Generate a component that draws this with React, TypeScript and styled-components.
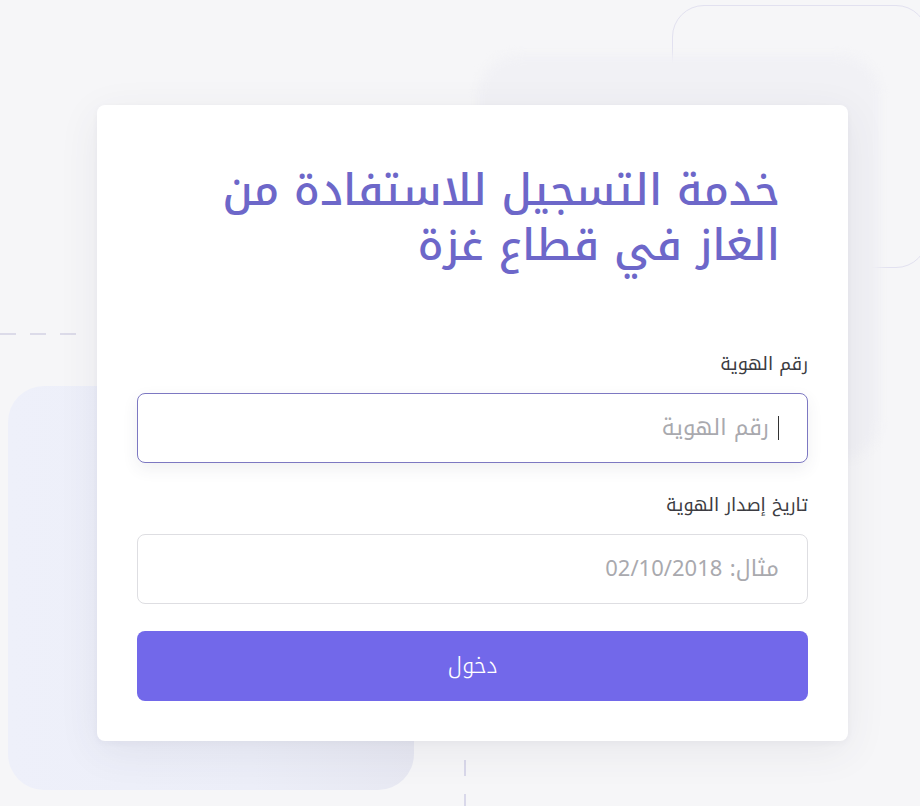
import React, { ReactElement } from 'react';
import styled, { createGlobalStyle } from 'styled-components';

const Colors = {
  page: '#f6f6f8',
  white: '#ffffff',
  title: '#6d67c9',
  label: '#3c3c42',
  placeholder: '#a9a9ae',
  focusBorder: '#7d78c2',
  border: '#dedee2',
  primary: '#7268ea',
  decoLine: '#e2e1f0',
};

const FontStack = `"Noto Kufi Arabic", "Noto Sans Arabic", "DejaVu Sans", sans-serif`;

const GlobalStyle = createGlobalStyle`
  html, body {
    margin: 0;
    padding: 0;
    background: ${Colors.page};
  }
  body {
    font-family: ${FontStack};
  }
  * {
    box-sizing: border-box;
  }
`;

interface FieldProps {
  label: string;
  placeholder: string;
  active?: boolean;
}

const Field = ({ label, placeholder, active }: FieldProps): ReactElement => {
  return (
    <FieldBox>
      <Label>{label}</Label>
      <InputWrap>
        <Input $active={active} placeholder={placeholder} readOnly />
        {active && <Caret />}
      </InputWrap>
    </FieldBox>
  );
};

export default function App(): ReactElement {
  return (
    <Page>
      <GlobalStyle />
      <OutlineDeco />
      <SoftDeco />
      <LeftDeco />
      <DashH />
      <DashV />
      <Card dir="rtl">
        <Title>
          <TitleLine>خدمة التسجيل للاستفادة من</TitleLine>
          <TitleLine>الغاز في قطاع غزة</TitleLine>
        </Title>
        <Form>
          <Field label="رقم الهوية" placeholder="رقم الهوية" active />
          <Field label="تاريخ إصدار الهوية" placeholder="مثال: 02/10/2018" />
          <SubmitButton type="button">دخول</SubmitButton>
        </Form>
      </Card>
    </Page>
  );
}

const Page = styled.div`
  position: relative;
  overflow: hidden;
  min-height: 806px;
  width: 920px;
  display: flex;
  align-items: flex-start;
  padding: 105px 0 0 97px;
  background: ${Colors.page};
`;

const OutlineDeco = styled.div`
  position: absolute;
  left: 672px;
  top: 5px;
  width: 256px;
  height: 263px;
  border: 1.5px solid ${Colors.decoLine};
  border-radius: 32px;
`;

const SoftDeco = styled.div`
  position: absolute;
  left: 478px;
  top: 55px;
  width: 402px;
  height: 405px;
  border-radius: 40px;
  background: #f1f1f5;
  filter: blur(5px);
`;

const LeftDeco = styled.div`
  position: absolute;
  left: 8px;
  top: 386px;
  width: 406px;
  height: 404px;
  border-radius: 36px;
  background: linear-gradient(90deg, #eef0fa 0%, #eceef8 60%, #e7e8f2 100%);
`;

const DashH = styled.div`
  position: absolute;
  left: 0;
  top: 333px;
  width: 84px;
  height: 2px;
  background: repeating-linear-gradient(90deg, #dcdbe9 0 16px, transparent 16px 30px);
`;

const DashV = styled.div`
  position: absolute;
  left: 464px;
  top: 760px;
  width: 2px;
  height: 46px;
  background: repeating-linear-gradient(180deg, #d9d8ea 0 16px, transparent 16px 34px);
`;

const Card = styled.div`
  position: relative;
  z-index: 1;
  width: 751px;
  padding: 58px 40px 40px;
  background: ${Colors.white};
  border-radius: 8px;
  box-shadow: 0 10px 40px rgba(60, 60, 90, 0.08), 0 2px 6px rgba(60, 60, 90, 0.04);
`;

const Title = styled.h1`
  display: flex;
  flex-direction: column;
  margin: 0 28px 79px 0;
  font-family: ${FontStack};
  font-size: 43px;
  font-weight: 500;
  color: ${Colors.title};
  text-align: right;
`;

const TitleLine = styled.span`
  display: block;
  height: 55px;
  line-height: 55px;
  white-space: nowrap;
`;

const Form = styled.div`
  display: flex;
  flex-direction: column;
`;

const FieldBox = styled.div`
  display: flex;
  flex-direction: column;
  margin-bottom: 30px;

  &:nth-child(2) {
    margin-bottom: 27px;
  }
`;

const Label = styled.label`
  font-size: 18px;
  line-height: 24px;
  color: ${Colors.label};
  margin-bottom: 17px;
`;

const InputWrap = styled.div`
  position: relative;
`;

const Input = styled.input<{ $active?: boolean }>`
  width: 100%;
  height: 70px;
  padding: ${({ $active }) => ($active ? '0 38px 0 28px' : '0 28px')};
  border-radius: 8px;
  border: ${({ $active }) => ($active ? `1.5px solid ${Colors.focusBorder}` : `1.5px solid ${Colors.border}`)};
  box-shadow: ${({ $active }) => ($active ? '0 6px 16px rgba(60, 60, 90, 0.08)' : 'none')};
  background: ${Colors.white};
  font-family: ${FontStack};
  font-size: 22px;
  color: ${Colors.label};
  direction: rtl;
  outline: none;

  &::placeholder {
    color: ${Colors.placeholder};
  }
`;

const Caret = styled.span`
  position: absolute;
  right: 29px;
  top: 23px;
  width: 1.5px;
  height: 24px;
  background: #333;
`;

const SubmitButton = styled.button`
  height: 70px;
  border: none;
  border-radius: 8px;
  background: ${Colors.primary};
  color: ${Colors.white};
  font-family: ${FontStack};
  font-size: 22px;
  font-weight: 300;
  cursor: pointer;
`;
